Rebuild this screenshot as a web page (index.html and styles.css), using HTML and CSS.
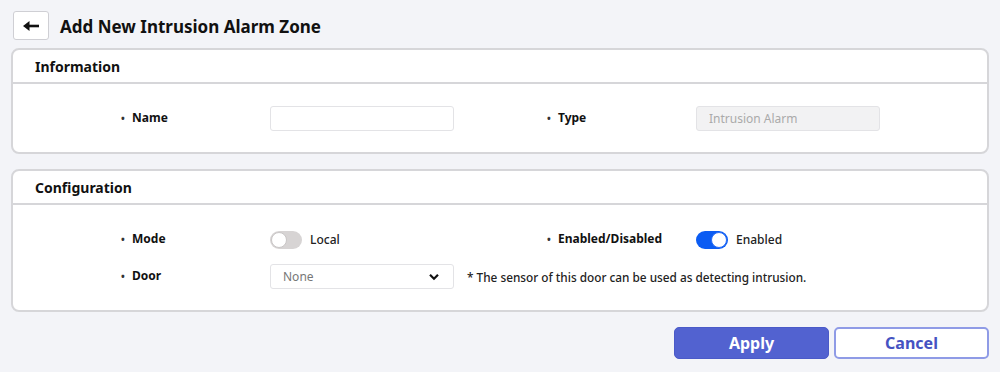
FILE: index.html
```html
<!DOCTYPE html>
<html lang="en">
<head>
  <meta charset="UTF-8">
  <meta name="viewport" content="width=device-width, initial-scale=1.0">
  <title>Add New Intrusion Alarm Zone</title>
  <link rel="stylesheet" href="styles.css">
</head>
<body>
  <div class="page-header">
    <button class="back-btn" type="button" aria-label="Back">
      <svg width="18" height="12" viewBox="0 0 18 12">
        <path d="M17 6H6" fill="none" stroke="#111" stroke-width="2.6"/>
        <path d="M1 6l6.5-5v10z" fill="#111"/>
      </svg>
    </button>
    <h1>Add New Intrusion Alarm Zone</h1>
  </div>

  <section class="card">
    <div class="card-header">Information</div>
    <div class="card-body">
      <div class="form-row">
        <div class="field">
          <span class="label">Name</span>
          <input class="text-input" type="text">
        </div>
        <div class="field">
          <span class="label">Type</span>
          <input class="text-input" type="text" value="Intrusion Alarm" disabled>
        </div>
      </div>
    </div>
  </section>

  <section class="card">
    <div class="card-header">Configuration</div>
    <div class="card-body">
      <div class="form-row">
        <div class="field">
          <span class="label">Mode</span>
          <span class="switch"><span class="knob"></span></span>
          <span class="switch-text">Local</span>
        </div>
        <div class="field">
          <span class="label">Enabled/Disabled</span>
          <span class="switch switch-on"><span class="knob"></span></span>
          <span class="switch-text">Enabled</span>
        </div>
      </div>
      <div class="form-row">
        <div class="field field-wide">
          <span class="label">Door</span>
          <div class="select">
            <span>None</span>
            <svg width="12" height="8" viewBox="0 0 12 8">
              <path d="M2 1.8l4 4 4-4" fill="none" stroke="#111" stroke-width="2.2"/>
            </svg>
          </div>
          <span class="note">* The sensor of this door can be used as detecting intrusion.</span>
        </div>
      </div>
    </div>
  </section>

  <div class="actions">
    <button class="btn btn-primary" type="button">Apply</button>
    <button class="btn btn-secondary" type="button">Cancel</button>
  </div>
</body>
</html>
```

FILE: styles.css
```css
body {
  font-family: 'Noto Sans', 'Open Sans', sans-serif;
  margin: 0;
  padding: 11px 11px 0 11px;
  background-color: #f3f4f8;
  color: #111;
}

.page-header {
  display: flex;
  align-items: center;
  gap: 11px;
  padding-left: 2px;
  margin-bottom: 8px;
}

.back-btn {
  width: 36px;
  height: 29px;
  display: flex;
  align-items: center;
  justify-content: center;
  background-color: white;
  border: 1px solid #cfcfd4;
  border-radius: 3px;
  padding: 0;
}

h1 {
  margin: 2px 0 0 0;
  font-size: 17px;
  font-weight: bold;
  color: #111;
}

.card {
  background-color: white;
  border: 2px solid #d6d6d9;
  border-radius: 8px;
  margin-bottom: 15px;
}

.card-header {
  height: 32px;
  line-height: 34px;
  padding-left: 22px;
  font-size: 14px;
  font-weight: bold;
  border-bottom: 2px solid #d6d6d9;
}

.card-body {
  padding: 22px 0 21px 108px;
  display: flex;
  flex-direction: column;
  gap: 12px;
}

.form-row {
  display: flex;
  height: 25px;
}

.field {
  display: flex;
  align-items: center;
  width: 426px;
}

.field-wide {
  width: auto;
}

.label {
  width: 149px;
  flex: none;
  font-size: 12px;
  font-weight: bold;
  margin-top: -2px;
}

.label::before {
  content: "\2022";
  display: inline-block;
  width: 11px;
  font-size: 10px;
  color: #333;
}

.text-input {
  width: 184px;
  height: 25px;
  box-sizing: border-box;
  border: 1px solid #e3e3e6;
  border-radius: 3px;
  padding: 0 12px;
  font-family: inherit;
  font-size: 12px;
  background-color: white;
}

.text-input:disabled {
  background-color: #f2f2f3;
  color: #aaa;
}

.switch {
  position: relative;
  width: 32px;
  height: 18px;
  border-radius: 9px;
  background-color: #d7d4d4;
  flex: none;
}

.knob {
  position: absolute;
  top: 1px;
  left: 1px;
  width: 14px;
  height: 14px;
  border-radius: 50%;
  background-color: white;
  border: 1px solid #c9c6c6;
}

.switch-on {
  background-color: #0b5cf3;
}

.switch-on .knob {
  left: auto;
  right: 1px;
  border-color: #2a6ef5;
}

.switch-text {
  margin-left: 8px;
  font-size: 12px;
  font-weight: 500;
  color: #222;
}

.select {
  width: 184px;
  height: 25px;
  box-sizing: border-box;
  border: 1px solid #e3e3e6;
  border-radius: 3px;
  padding: 0 13px 0 12px;
  display: flex;
  align-items: center;
  justify-content: space-between;
  font-size: 12px;
  color: #777;
}

.note {
  margin-left: 13px;
  font-size: 11.8px;
  font-weight: 500;
  color: #222;
  white-space: nowrap;
}

.actions {
  display: flex;
  justify-content: flex-end;
  gap: 5px;
}

.btn {
  width: 155px;
  height: 32px;
  border-radius: 5px;
  font-family: inherit;
  font-size: 16px;
  font-weight: bold;
  cursor: pointer;
}

.btn-primary {
  background-color: #5262d0;
  border: 1px solid #4a5ac8;
  color: white;
}

.btn-secondary {
  background-color: white;
  border: 2px solid #8f9be6;
  color: #4552c2;
}
```
